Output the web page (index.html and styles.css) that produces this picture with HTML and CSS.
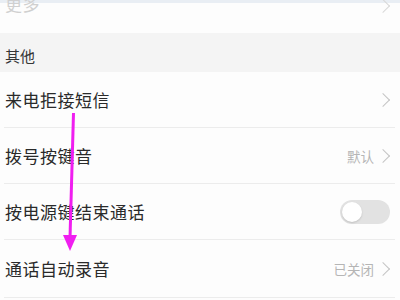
FILE: index.html
```html
<!DOCTYPE html>
<html lang="zh">
<head>
<meta charset="utf-8">
<link rel="stylesheet" href="styles.css">
</head>
<body>
<div class="screen">
  <div class="topstrip"></div>
  <div class="row row-top">
    <span class="label faded">更多</span>
    <span class="chev faded-chev"></span>
  </div>
  <div class="section">其他</div>
  <div class="list">
    <div class="row">
      <span class="label">来电拒接短信</span>
      <span class="right"><span class="chev"></span></span>
    </div>
    <div class="row">
      <span class="label">拨号按键音</span>
      <span class="right"><span class="value">默认</span><span class="chev"></span></span>
    </div>
    <div class="row">
      <span class="label">按电源键结束通话</span>
      <span class="right"><span class="toggle"><span class="knob"></span></span></span>
    </div>
    <div class="row">
      <span class="label">通话自动录音</span>
      <span class="right"><span class="value">已关闭</span><span class="chev"></span></span>
    </div>
  </div>
  <svg class="arrow" width="400" height="300" viewBox="0 0 400 300">
    <line x1="73.5" y1="113" x2="70" y2="238" stroke="#f01ef0" stroke-width="3"/>
    <polygon points="63,235 77,235 70,251" fill="#f01ef0"/>
  </svg>
</div>
</body>
</html>
```
FILE: styles.css
```css
html, body {
  margin: 0;
  padding: 0;
  background: #fdfdfd;
}
.screen {
  position: relative;
  width: 400px;
  height: 300px;
  overflow: hidden;
  font-family: "Noto Sans CJK SC", "Noto Sans", sans-serif;
  color: #333;
}
.topstrip {
  height: 3px;
  background: #e9eef4;
}
.row {
  display: flex;
  align-items: center;
  justify-content: space-between;
  height: 56px;
  margin: 0 5px 0 4px;
  padding: 0 0 0 1px;
  border-bottom: 1px solid #ececec;
  box-sizing: border-box;
}
.row:last-child {
  height: 58px;
}
.row-top {
  height: 30px;
  border-bottom: none;
  align-items: flex-start;
}
.row-top .label {
  margin-top: -11px;
}
.label {
  font-size: 17px;
  line-height: 24px;
  letter-spacing: 0.5px;
  color: #2a2a2a;
}
.row-top .label.faded {
  color: #d0d0d0;
}
.section {
  height: 39px;
  background: #f4f4f4;
  font-size: 15px;
  line-height: 18px;
  padding: 14px 0 0 5px;
  box-sizing: border-box;
  color: #363636;
}
.right {
  display: flex;
  align-items: center;
}
.value {
  font-size: 13.5px;
  color: #b5b5b5;
  margin-right: 4px;
}
.chev {
  display: inline-block;
  width: 9px;
  height: 9px;
  border-top: 1.6px solid #c4c4c4;
  border-right: 1.6px solid #c4c4c4;
  transform: rotate(45deg);
  margin-right: 7px;
}
.faded-chev {
  margin-top: -2px;
  border-color: #d8d8d8;
}
.toggle {
  display: block;
  width: 50px;
  height: 24px;
  border-radius: 12px;
  background: #e2e2e2;
  position: relative;
  margin-right: 5px;
}
.knob {
  position: absolute;
  left: 2px;
  top: 2px;
  width: 20px;
  height: 20px;
  border-radius: 50%;
  background: #fff;
  box-shadow: 0 1px 2px rgba(0,0,0,0.15);
}
.arrow {
  position: absolute;
  left: 0;
  top: 0;
}
```
